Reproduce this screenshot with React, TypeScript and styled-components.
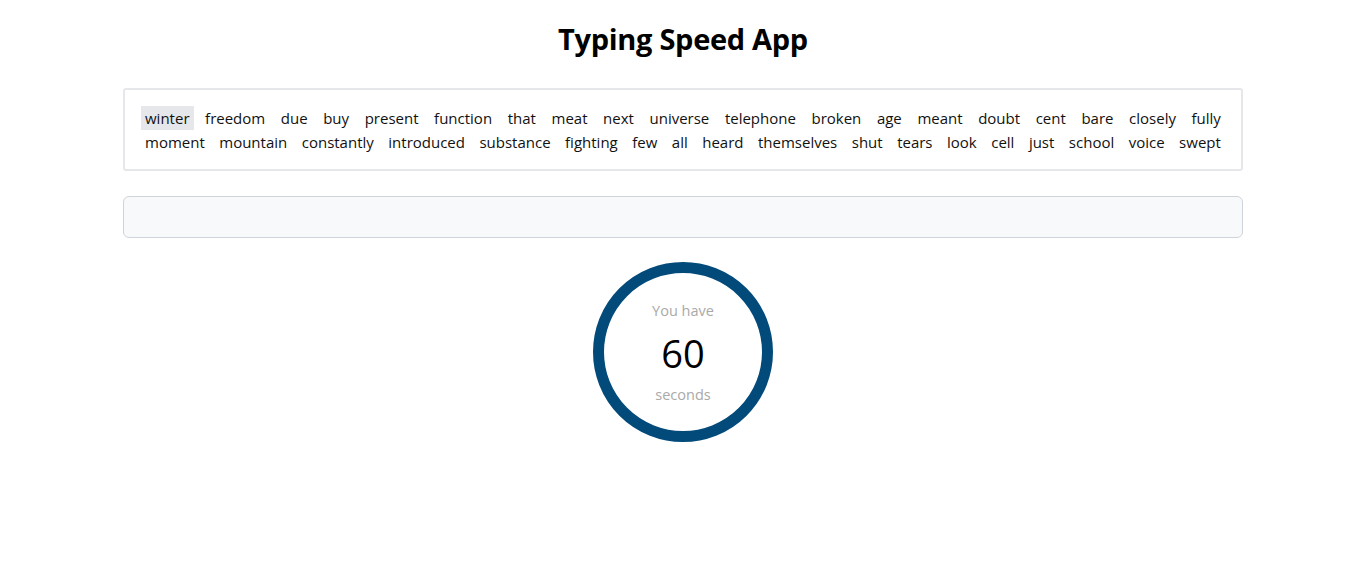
import React from "react";
import styled, { createGlobalStyle } from "styled-components";

const GlobalStyle = createGlobalStyle`
  html, body { margin: 0; padding: 0; background: #ffffff; }
  body { font-family: "Open Sans", "Noto Sans", sans-serif; color: #111; }
  * { box-sizing: border-box; }
`;

const Page = styled.div`
  width: 1120px;
  margin: 0 auto;
  display: flex;
  flex-direction: column;
  align-items: stretch;
`;

const Title = styled.h1`
  margin: 20px 0 30px;
  text-align: center;
  font-size: 29px;
  line-height: 38px;
  font-weight: 700;
  letter-spacing: -0.3px;
  color: #000;
`;

const WordBox = styled.div`
  border: 2px solid #e5e7eb;
  border-radius: 3px;
  padding: 16px 16px;
  height: 83px;
  overflow: hidden;
`;

const Line = styled.div`
  display: flex;
  justify-content: space-between;
  height: 24px;
  align-items: center;
`;

const Word = styled.span<{ $active?: boolean }>`
  padding: 0 4px;
  font-size: 15px;
  line-height: 24px;
  color: #111;
  background: ${(p) => (p.$active ? "#e5e7eb" : "transparent")};
`;

const Input = styled.input`
  margin-top: 25px;
  height: 42px;
  width: 100%;
  border: 1px solid #cfd4da;
  border-radius: 6px;
  background: #f8f9fa;
  outline: none;
  padding: 0 12px;
  font-family: inherit;
  font-size: 16px;
`;

const Timer = styled.div`
  margin: 24px auto 0;
  width: 180px;
  height: 180px;
  border-radius: 50%;
  border: 11px solid #024a7a;
  padding-top: 2px;
  display: flex;
  flex-direction: column;
  align-items: center;
  justify-content: center;
`;

const Small = styled.div`
  font-size: 14.5px;
  line-height: 20px;
  color: #a9a9a9;
`;

const Big = styled.div`
  font-size: 38px;
  line-height: 48px;
  margin: 8px 0 8px;
  color: #000;
`;

const line1 = [
  "winter", "freedom", "due", "buy", "present", "function", "that", "meat", "next",
  "universe", "telephone", "broken", "age", "meant", "doubt", "cent", "bare", "closely", "fully",
];
const line2 = [
  "moment", "mountain", "constantly", "introduced", "substance", "fighting", "few", "all",
  "heard", "themselves", "shut", "tears", "look", "cell", "just", "school", "voice", "swept",
];

export default function App() {
  return (
    <>
      <GlobalStyle />
      <Page>
        <Title>Typing Speed App</Title>
        <WordBox>
          <Line>
            {line1.map((w, i) => (
              <Word key={i} $active={i === 0}>{w}</Word>
            ))}
          </Line>
          <Line>
            {line2.map((w, i) => (
              <Word key={i}>{w}</Word>
            ))}
          </Line>
        </WordBox>
        <Input type="text" />
        <Timer>
          <Small>You have</Small>
          <Big>60</Big>
          <Small>seconds</Small>
        </Timer>
      </Page>
    </>
  );
}
